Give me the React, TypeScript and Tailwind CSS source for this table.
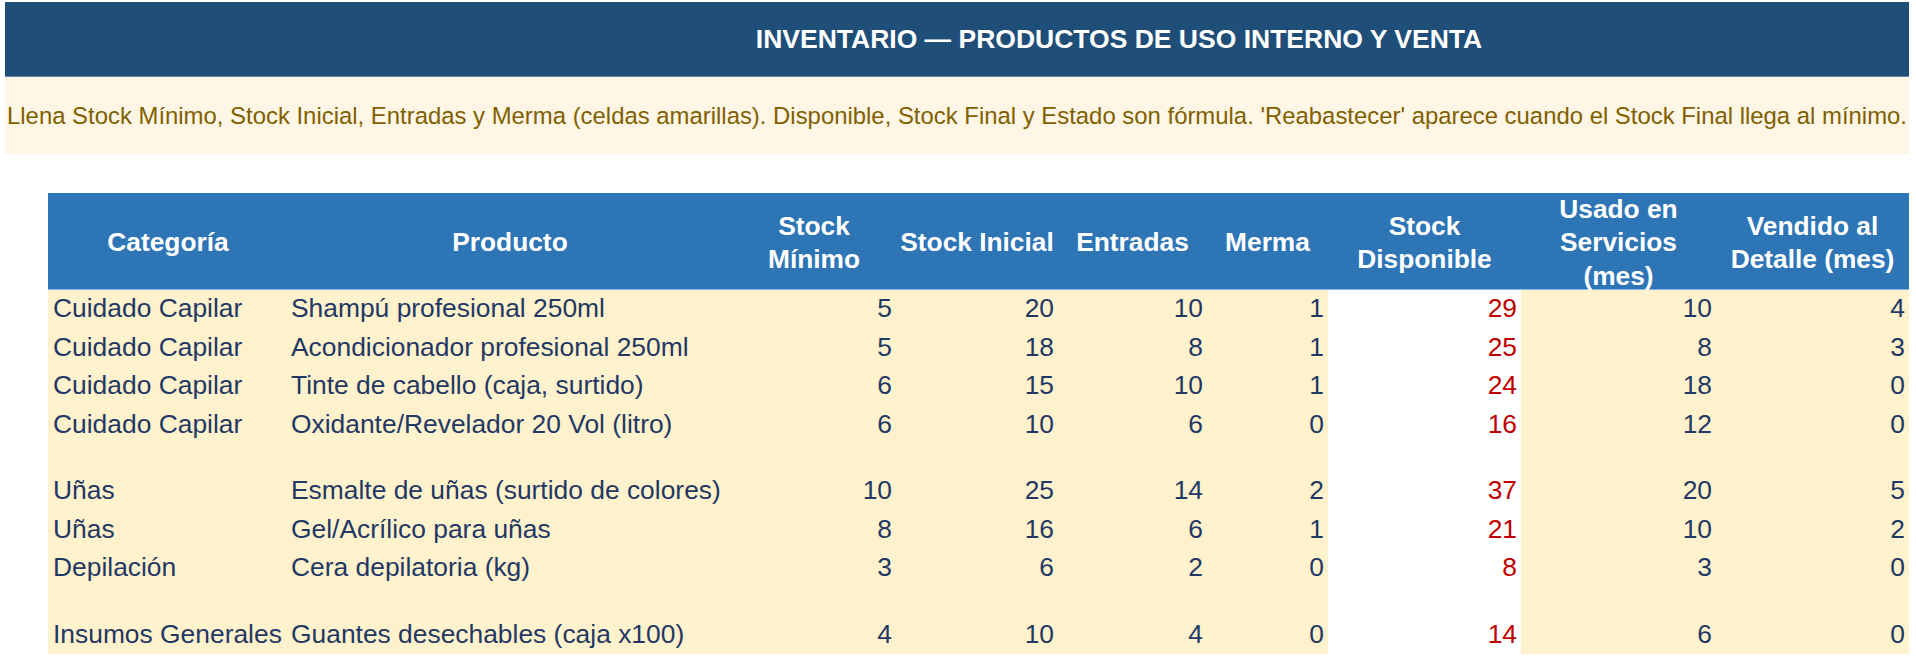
import React from "react";

type Row = {
  cat: string;
  prod: string;
  v: number[];
} | null;

const rows: Row[] = [
  { cat: "Cuidado Capilar", prod: "Shampú profesional 250ml", v: [5, 20, 10, 1, 29, 10, 4] },
  { cat: "Cuidado Capilar", prod: "Acondicionador profesional 250ml", v: [5, 18, 8, 1, 25, 8, 3] },
  { cat: "Cuidado Capilar", prod: "Tinte de cabello (caja, surtido)", v: [6, 15, 10, 1, 24, 18, 0] },
  { cat: "Cuidado Capilar", prod: "Oxidante/Revelador 20 Vol (litro)", v: [6, 10, 6, 0, 16, 12, 0] },
  null,
  { cat: "Uñas", prod: "Esmalte de uñas (surtido de colores)", v: [10, 25, 14, 2, 37, 20, 5] },
  { cat: "Uñas", prod: "Gel/Acrílico para uñas", v: [8, 16, 6, 1, 21, 10, 2] },
  { cat: "Depilación", prod: "Cera depilatoria (kg)", v: [3, 6, 2, 0, 8, 3, 0] },
  null,
  { cat: "Insumos Generales", prod: "Guantes desechables (caja x100)", v: [4, 10, 4, 0, 14, 6, 0] },
];

const headers: string[][] = [
  ["Categoría"],
  ["Producto"],
  ["Stock", "Mínimo"],
  ["Stock Inicial"],
  ["Entradas"],
  ["Merma"],
  ["Stock", "Disponible"],
  ["Usado en", "Servicios", "(mes)"],
  ["Vendido al", "Detalle (mes)"],
];

export default function App() {
  return (
    <div
      className="w-[1916px] h-[661px] overflow-hidden bg-white pt-[2px] pl-[5px]"
      style={{ fontFamily: '"Liberation Sans", Arial, sans-serif' }}
    >
      <div className="w-[1904px] h-[75px] bg-[#1F4E79] border-b border-[#5F82A6] flex items-center justify-center pl-[324px] pt-[2px]">
        <span className="text-white font-bold text-[26.5px] whitespace-nowrap">
          INVENTARIO — PRODUCTOS DE USO INTERNO Y VENTA
        </span>
      </div>
      <div className="w-[1904px] h-[77px] bg-[#FFF6E5] flex items-center justify-center">
        <span className="text-[#7F6000] text-[23.9px] whitespace-nowrap">
          Llena Stock Mínimo, Stock Inicial, Entradas y Merma (celdas amarillas). Disponible, Stock Final y Estado son fórmula. 'Reabastecer' aparece cuando el Stock Final llega al mínimo.
        </span>
      </div>

      <div className="mt-[39px] ml-[43px] w-[1861px] grid grid-cols-[240px_444px_164px_162px_149px_121px_193px_195px_193px]">
        {headers.map((h, i) => (
          <div
            key={"h" + i}
            className="h-[97px] pt-[4px] bg-[#2E75B6] border-b border-[#8DB4E2] flex flex-col items-center justify-center text-white font-bold text-[26.3px] leading-[33.5px] text-center whitespace-nowrap overflow-visible"
          >
            {h.map((l, j) => (
              <span key={j}>{l}</span>
            ))}
          </div>
        ))}
        {rows.map((r, ri) =>
          r === null ? (
            <React.Fragment key={"r" + ri}>
              {headers.map((_, ci) => (
                <div
                  key={ci}
                  className={ci === 6 ? "h-[28px] bg-white" : "h-[28px] bg-[#FFF2CC]"}
                />
              ))}
            </React.Fragment>
          ) : (
            <React.Fragment key={"r" + ri}>
              <div className="h-[38.5px] bg-[#FFF2CC] flex items-center pl-[5px] text-[26.4px] text-[#1F3864] whitespace-nowrap">
                {r.cat}
              </div>
              <div className="h-[38.5px] bg-[#FFF2CC] flex items-center pl-[3px] text-[26.4px] text-[#1F3864] whitespace-nowrap">
                {r.prod}
              </div>
              {r.v.map((n, ci) => (
                <div
                  key={ci}
                  className={
                    ci === 4
                      ? "h-[38.5px] bg-white flex items-center justify-end pr-[4px] text-[26.4px] text-[#C00000]"
                      : "h-[38.5px] bg-[#FFF2CC] flex items-center justify-end pr-[4px] text-[26.4px] text-[#1F3864]"
                  }
                >
                  {n}
                </div>
              ))}
            </React.Fragment>
          )
        )}
      </div>
    </div>
  );
}
